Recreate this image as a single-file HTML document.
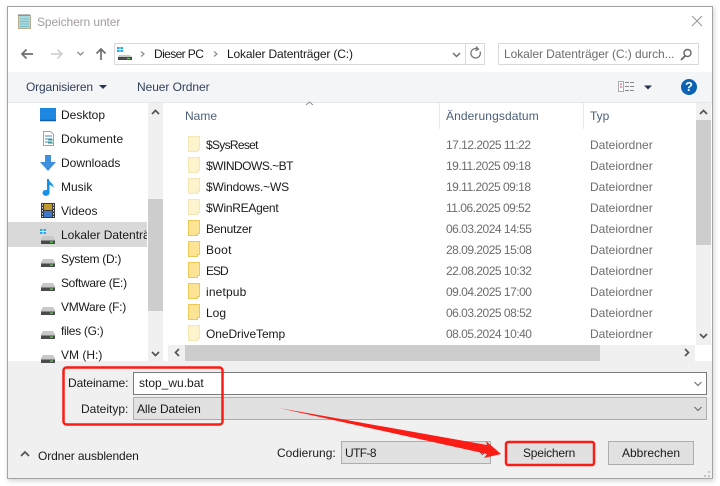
<!DOCTYPE html>
<html><head><meta charset="utf-8"><style>
html,body{margin:0;padding:0;background:#fff}
#p{position:relative;width:720px;height:486px;overflow:hidden;background:#fff;font:12px "Liberation Sans",sans-serif;color:#1a1a1a}
#p div{position:absolute;box-sizing:border-box}
.t{position:absolute;white-space:nowrap;line-height:16px;height:16px}
.g{color:#6d6d6d}
.d{letter-spacing:-.5px}
</style></head><body><div id="p">
<div style="left:7px;top:6px;width:706px;height:473px;background:#fff;border:1px solid #a3a3a3;box-shadow:1px 2px 5px rgba(0,0,0,.18)"></div>
<div style="left:8px;top:72px;width:704px;height:30px;background:#f4f5f7"></div>
<div style="left:8px;top:102px;width:704px;height:1px;background:#e8e8e8"></div>
<div style="left:8px;top:361px;width:704px;height:117px;background:#f0f0f0"></div>

<svg style="position:absolute;left:0;top:0" width="720" height="486" viewBox="0 0 720 486">
<path d="M18.500 15.500h12v13h-12z" fill="#a8dbe0" stroke="#b9ad8e"/>
<path d="M20 19h9M20 21.500h9M20 24h9M20 26.500h9" stroke="#7cc0cc"/>
<path d="M19 14v2M21 14v2M23 14v2M25 14v2M27 14v2M29 14v2" stroke="#777"/>
<path d="M692 16l10 10M702 16l-10 10" stroke="#969696" fill="none"/>
<path d="M33 54H22M26.500 49.500L22 54l4.500 4.500" stroke="#6e6e6e" stroke-width="1.700" fill="none"/>
<path d="M62 54H51M57.500 49.500L62 54l-4.500 4.500" stroke="#d0d0d0" stroke-width="1.700" fill="none"/>
<path d="M77.500 52l3 3 3-3" stroke="#8a8a8a" stroke-width="1.300" fill="none"/>
<path d="M101 60V49M96.500 53.500L101 49l4.500 4.500" stroke="#6e6e6e" stroke-width="1.700" fill="none"/>
<rect x="114.500" y="43.500" width="370" height="21" fill="#fff" stroke="#d9d9d9"/>
<path d="M465.500 44v20" stroke="#d9d9d9"/>
<rect x="117" y="47" width="6" height="5" fill="#26a9f0"/><path d="M120 47v5M117 49.500h6" stroke="#fff" stroke-width=".7"/>
<path d="M119 55h11l2 2v3h-14v-3z" fill="#c8c8c8"/><rect x="118" y="57" width="14" height="3" fill="#4a4a4a"/><rect x="127" y="58" width="3" height="1.200" fill="#58d058"/>
<path d="M141 51.500l3 2.500-3 2.500M214 51.500l3 2.500-3 2.500" stroke="#8c8c8c" stroke-width="1.200" fill="none"/>
<path d="M453 53l3.500 3.500 3.500-3.500" stroke="#6e6e6e" stroke-width="1.500" fill="none"/>
<path d="M480 51.500a4.700 4.700 0 1 1-2-2.300M476 46.500l2.500 2.700-3 1.500" stroke="#777" stroke-width="1.300" fill="none"/>
<rect x="498.500" y="43.500" width="200" height="21" fill="#fff" stroke="#d9d9d9"/>
<circle cx="687.500" cy="53" r="3.500" fill="none" stroke="#666" stroke-width="1.400"/><path d="M685 56l-4 4" stroke="#666" stroke-width="1.800"/>
<path d="M99 85h8l-4 4z" fill="#26344f"/>
<path d="M644 85.500h8l-4 4z" fill="#26344f"/>
<rect x="618.500" y="81.500" width="5" height="10" fill="#fff" stroke="#aaa"/><path d="M620 84h2M620 87h2" stroke="#c36"/><path d="M625 82.500h4M625 86.500h4M625 90.500h4M630 82.500h4M630 86.500h4M630 90.500h4" stroke="#888"/>
<circle cx="689" cy="87" r="8" fill="#0b62b4"/>

<rect x="148" y="103" width="15" height="258" fill="#f0f0f0"/>
<rect x="148" y="199" width="15" height="112" fill="#cdcdcd"/>
<path d="M152 114l3.500-3.500 3.500 3.500M152 352l3.500 3.500 3.500-3.500" stroke="#555" stroke-width="1.700" fill="none"/>
<rect x="8" y="222" width="139" height="25" fill="#d9d9d9"/>
<rect x="40" y="108" width="16" height="12" fill="#1d87e2"/><path d="M40 120.500h16" stroke="#0c5fa8" stroke-width="1.500"/>
<path d="M43.500 131.500h7l3 3v11h-10z" fill="#fff" stroke="#96a4b4"/><path d="M45 136h7M45 139h7M45 142h7" stroke="#3b88c3"/><path d="M48 140h5M48 143h5" stroke="#3d9a7e"/>
<path d="M45 155h6v7h5l-8 9-8-9h5z" fill="#3f8fdf"/>
<path d="M47 179h2c0 4 5 4 4.500 9-1-2-2.500-3-4-3v8a3.500 3 0 1 1-2.500-3z" fill="#1991e8"/>
<rect x="41" y="203" width="14" height="15" fill="#3a3a3a"/><rect x="44" y="204" width="8" height="6" fill="#c09a30"/><rect x="44" y="211" width="8" height="6" fill="#3b78c8"/><path d="M42.500 204v13M53.500 204v13" stroke="#ddd" stroke-dasharray="1.500 1.500"/>
<rect x="40" y="229" width="6" height="5" fill="#26a9f0"/><path d="M43 229v5M40 231.500h6" stroke="#fff" stroke-width=".7"/>
<g id="d"><path d="M43 236h10l2 3v5H41v-5z" fill="#c8c8c8"/><rect x="41" y="240.500" width="14" height="3.500" fill="#4a4a4a"/><rect x="50" y="241.500" width="3" height="1.300" fill="#58d058"/></g>
<use href="#d" y="23"/><use href="#d" y="47"/><use href="#d" y="71"/><use href="#d" y="95"/><use href="#d" y="119"/>
<path d="M439.500 103v26M583.500 103v26" stroke="#e8e8e8"/>
<path d="M306 105l3.500-3 3.500 3" stroke="#8a8a8a" fill="none"/>
<rect x="696" y="103" width="15" height="242" fill="#f0f0f0"/>
<rect x="696" y="120" width="15" height="125" fill="#cdcdcd"/>
<path d="M700 114l3.500-3.500 3.500 3.500M700 334l3.500 3.500 3.500-3.500" stroke="#555" stroke-width="1.700" fill="none"/>
<rect x="168" y="345" width="527" height="16" fill="#f0f0f0"/>
<rect x="185" y="345" width="415" height="16" fill="#cdcdcd"/>
<path d="M179 349l-3.500 3.500 3.500 3.500M685 349l3.500 3.500-3.500 3.500" stroke="#555" stroke-width="1.700" fill="none"/>

<g id="f1"><path d="M188.500 136.500h11v13h-2v2h-9z" fill="#fdf3cd" stroke="#f5e6b5"/><path d="M197.500 151.500v-2h2" fill="#f5e6b5" stroke="#f5e6b5"/></g>
<use href="#f1" y="21"/><use href="#f1" y="42"/><use href="#f1" y="63"/>
<g id="f2"><path d="M188.500 220.500h11v13h-2v2h-9z" fill="#fde494" stroke="#eec95a"/></g>
<use href="#f2" y="21"/><use href="#f2" y="42"/><use href="#f2" y="63"/><use href="#f2" y="84"/>
<use href="#f1" y="189"/>

<rect x="133.500" y="372.500" width="573" height="22" fill="#fff" stroke="#7a7a7a"/>
<rect x="133.500" y="397.500" width="573" height="22" fill="#e1e1e1" stroke="#adadad"/>
<path d="M694.500 382l3.500 3.500 3.500-3.500M694.500 407l3.500 3.500 3.500-3.500" stroke="#666" fill="none"/>
<rect x="341.500" y="441.500" width="149" height="22" fill="#e1e1e1" stroke="#adadad"/>
<path d="M480 452l2.500 2.500 2.500-2.500" stroke="#555" fill="none"/>
<rect x="608.500" y="441.500" width="85" height="23" fill="#e1e1e1" stroke="#adadad"/>
<rect x="506" y="442" width="88" height="23" rx="2" fill="#e1e1e1" stroke="#fb1c16" stroke-width="2.500"/>
<rect x="63.500" y="367.500" width="159" height="57" rx="3" fill="none" stroke="#fb1c16" stroke-width="2.500"/>
<path d="M279 408L487 445l-1-4 15 13-17 4 3-4z" fill="#fb1c16"/>
<path d="M21 456l4-4 4 4" stroke="#555" stroke-width="1.700" fill="none"/>
<path d="M708 471h2v2h-2zM708 475h2v2h-2zM704 475h2v2h-2z" fill="#c4c4c4"/>
</svg>

<span class="t" style="left:37px;top:14px;color:#a39c9c;letter-spacing:-.1px">Speichern unter</span>
<span class="t" style="left:154px;top:46px;letter-spacing:-.6px">Dieser PC</span>
<span class="t" style="left:227px;top:46px;letter-spacing:-.15px">Lokaler Datenträger (C:)</span>
<span class="t g" style="left:504px;top:46px;letter-spacing:-.07px">Lokaler Datenträger (C:) durch...</span>
<span class="t" style="left:26px;top:79px;color:#33405a;letter-spacing:-.15px">Organisieren</span>
<span class="t" style="left:137px;top:79px;color:#33405a;letter-spacing:-.07px">Neuer Ordner</span>
<span class="t" style="left:685px;top:79px;color:#fff;font-weight:bold;font-size:13px">?</span>

<span class="t" style="left:61px;top:107px">Desktop</span>
<span class="t" style="left:61px;top:131px;letter-spacing:.1px">Dokumente</span>
<span class="t" style="left:61px;top:155px">Downloads</span>
<span class="t" style="left:61px;top:179px">Musik</span>
<span class="t" style="left:61px;top:203px">Videos</span>
<span class="t" style="left:61px;top:227px;width:86px;overflow:hidden">Lokaler Datenträger</span>
<span class="t" style="left:61px;top:251px;letter-spacing:-.3px">System (D:)</span>
<span class="t" style="left:61px;top:275px;letter-spacing:-.33px">Software (E:)</span>
<span class="t" style="left:61px;top:299px;letter-spacing:-.3px">VMWare (F:)</span>
<span class="t" style="left:61px;top:323px;letter-spacing:-.3px">files (G:)</span>
<span class="t" style="left:61px;top:347px">VM (H:)</span>

<span class="t" style="left:185px;top:108px;color:#4c607a">Name</span>
<span class="t" style="left:446px;top:108px;color:#4c607a;letter-spacing:.1px">Änderungsdatum</span>
<span class="t" style="left:590px;top:108px;color:#4c607a">Typ</span>

<span class="t" style="left:206px;top:137px;letter-spacing:-.7px">$SysReset</span><span class="t g d" style="left:446px;top:137px">17.12.2025 11:22</span><span class="t g" style="left:590px;top:137px">Dateiordner</span>
<span class="t" style="left:206px;top:158px;letter-spacing:-.5px">$WINDOWS.~BT</span><span class="t g d" style="left:446px;top:158px">19.11.2025 09:18</span><span class="t g" style="left:590px;top:158px">Dateiordner</span>
<span class="t" style="left:206px;top:179px;letter-spacing:-.17px">$Windows.~WS</span><span class="t g d" style="left:446px;top:179px">19.11.2025 09:18</span><span class="t g" style="left:590px;top:179px">Dateiordner</span>
<span class="t" style="left:206px;top:200px;letter-spacing:-.27px">$WinREAgent</span><span class="t g d" style="left:446px;top:200px">11.06.2025 09:52</span><span class="t g" style="left:590px;top:200px">Dateiordner</span>
<span class="t" style="left:206px;top:221px;letter-spacing:-.25px">Benutzer</span><span class="t g d" style="left:446px;top:221px">06.03.2024 14:55</span><span class="t g" style="left:590px;top:221px">Dateiordner</span>
<span class="t" style="left:206px;top:242px;letter-spacing:.25px">Boot</span><span class="t g d" style="left:446px;top:242px">28.09.2025 15:08</span><span class="t g" style="left:590px;top:242px">Dateiordner</span>
<span class="t" style="left:206px;top:263px;letter-spacing:-1px">ESD</span><span class="t g d" style="left:446px;top:263px">22.08.2025 10:32</span><span class="t g" style="left:590px;top:263px">Dateiordner</span>
<span class="t" style="left:206px;top:284px;letter-spacing:.15px">inetpub</span><span class="t g d" style="left:446px;top:284px">09.04.2025 17:00</span><span class="t g" style="left:590px;top:284px">Dateiordner</span>
<span class="t" style="left:206px;top:305px">Log</span><span class="t g d" style="left:446px;top:305px">06.03.2025 08:52</span><span class="t g" style="left:590px;top:305px">Dateiordner</span>
<span class="t" style="left:206px;top:326px;letter-spacing:-.08px">OneDriveTemp</span><span class="t g d" style="left:446px;top:326px">08.05.2024 10:40</span><span class="t g" style="left:590px;top:326px">Dateiordner</span>

<span class="t" style="left:68px;top:375px;letter-spacing:-.1px">Dateiname:</span>
<span class="t" style="left:139px;top:375px">stop_wu.bat</span>
<span class="t" style="left:81px;top:401px">Dateityp:</span>
<span class="t" style="left:137px;top:401px;letter-spacing:-.08px">Alle Dateien</span>
<span class="t" style="left:38px;top:448px;letter-spacing:-.12px">Ordner ausblenden</span>
<span class="t" style="left:277px;top:445px">Codierung:</span>
<span class="t" style="left:345px;top:445px;letter-spacing:-.6px">UTF-8</span>
<span class="t" style="left:523px;top:445px;letter-spacing:-.22px">Speichern</span>
<span class="t" style="left:622px;top:445px">Abbrechen</span>
</div></body></html>
